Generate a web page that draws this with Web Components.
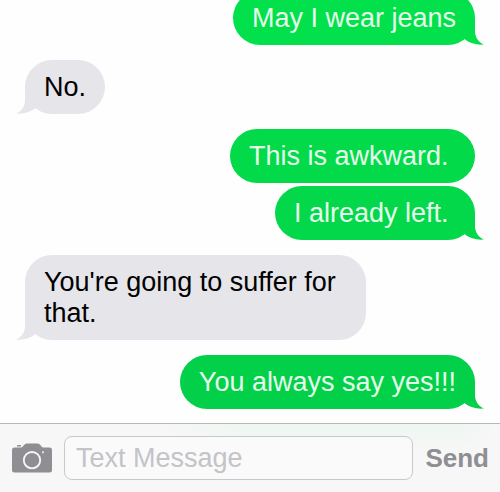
<!DOCTYPE html>
<html lang="en">
<head>
<meta charset="utf-8">
<meta name="viewport" content="width=device-width, initial-scale=1">
<title>Messages</title>
<style>
  html, body { height: 100%; margin: 0; }
  body { background: #fefefe; font-family: "Liberation Sans", Arial, sans-serif; font-size: 27px; line-height: 31px; }
</style>
</head>
<body>
<message-screen>
  <chat-bubble side="out" style="--fill:#02e04b">May I wear jeans</chat-bubble>
  <chat-bubble side="in">No.</chat-bubble>
  <chat-bubble side="out" joined style="--fill:#02da4a">This is awkward.&nbsp;</chat-bubble>
  <chat-bubble side="out" style="--fill:#02d84a">I already left.&nbsp;</chat-bubble>
  <chat-bubble side="in">You're going to suffer for that.</chat-bubble>
  <chat-bubble side="out" style="--fill:#02d048">You always say yes!!!</chat-bubble>
  <message-composer slot="composer"></message-composer>
</message-screen>
<script>
function define(name, html) {
  const template = document.createElement('template');
  template.innerHTML = html;
  customElements.define(name, class extends HTMLElement {
    constructor() {
      super();
      this.attachShadow({ mode: 'open' }).append(template.content.cloneNode(true));
    }
  });
}

define('message-screen', `
  <style>
    :host { display: flex; flex-direction: column; height: 100%; overflow: hidden; }
    main { flex: 1; min-height: 0; display: flex; flex-direction: column; justify-content: flex-end; padding: 0 25px 14px; overflow: hidden; }
  </style>
  <main><slot></slot></main>
  <slot name="composer"></slot>`);

define('chat-bubble', `
  <style>
    :host { display: block; position: relative; isolation: isolate; flex: none; box-sizing: border-box; max-width: 341px;
      padding: 12px 19px 11px; margin-top: 15px; border-radius: 27px; }
    :host([side="out"]) { align-self: flex-end; background: var(--fill); color: #e6fcec; }
    :host([side="in"]) { align-self: flex-start; background: #e5e5ea; color: #000; }
    :host([joined]) { margin-bottom: -12px; }
    svg { position: absolute; z-index: -1; bottom: 0; width: 32px; height: 27px; display: block; }
    :host([side="out"]) svg { right: -9px; fill: var(--fill); }
    :host([side="in"]) svg { left: -9px; fill: #e5e5ea; transform: scaleX(-1); }
    :host([joined]) svg { display: none; }
  </style>
  <slot></slot>
  <svg viewBox="0 0 32 27" aria-hidden="true"><path d="M10 0H23V13C23 19 26 24 32 26.500C25 27.200 18 25.500 13 21.500L10 18Z"/></svg>`);

define('message-composer', `
  <style>
    :host { display: flex; flex: none; align-items: center; gap: 12px; box-sizing: border-box;
      padding: 12px 11px 12px 12px; border-top: 1px solid #b6b9b8;
      background: linear-gradient(#f7f7f700, #f7f7f7 30px), linear-gradient(90deg, #f7f7f7 30%, #eef7f1 50%, #eef7f1 90%, #f7f7f7); }
    button { flex: none; margin: 0; padding: 0; border: 0; background: none; color: #8e8e93; font: bold 26px/31px "Liberation Sans", Arial, sans-serif; }
    button svg { display: block; }
    input { flex: 1; min-width: 0; box-sizing: border-box; height: 44px; margin: 0; padding: 0 11px;
      border: 1px solid #c8c8cd; border-radius: 8px; background: #fafafa; font: inherit; color: #000; outline: 0; }
    input::placeholder { color: #c3c3c8; opacity: 1; }
  </style>
  <button type="button" aria-label="Camera">
    <svg width="40" height="30" viewBox="0 0 40 30" aria-hidden="true">
      <path fill="#8e8e93" d="M5.500 2H8.500Q9 2 9 2.500V3.500H5V2.500Q5 2 5.500 2ZM2.500 4.600H8C12 4.600 11.500 .5 15 .5H25.500C29 .5 28.500 4.600 32 4.600H37.500Q40 4.600 40 7V27Q40 29.500 37.500 29.500H2.500Q0 29.500 0 27V7Q0 4.600 2.500 4.600Z"/>
      <circle cx="20" cy="17.200" r="8.200" fill="none" stroke="#f7f7f7" stroke-width="1.800"/>
      <circle cx="31" cy="9.200" r="1" fill="#f7f7f7"/>
    </svg>
  </button>
  <input type="text" placeholder="Text Message" aria-label="Text Message">
  <button type="button">Send</button>`);
</script>
</body>
</html>
